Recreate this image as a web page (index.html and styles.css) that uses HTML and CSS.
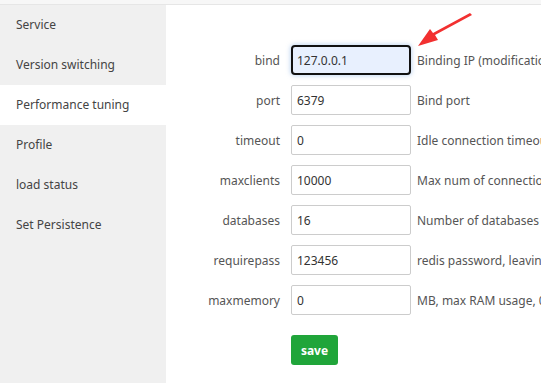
FILE: index.html
```html
<!DOCTYPE html>
<html>
<head>
<meta charset="utf-8">
<link rel="stylesheet" href="styles.css">
</head>
<body>
<div class="topbar"></div>
<div class="layout">
  <nav class="sidebar">
    <div class="item">Service</div>
    <div class="item">Version switching</div>
    <div class="item active">Performance tuning</div>
    <div class="item">Profile</div>
    <div class="item">load status</div>
    <div class="item">Set Persistence</div>
  </nav>
  <main class="main">
    <form class="form">
      <label class="lbl">bind</label>
      <input class="inp focused" value="127.0.0.1">
      <span class="desc">Binding IP (modification is not recommended)</span>

      <label class="lbl">port</label>
      <input class="inp" value="6379">
      <span class="desc">Bind port</span>

      <label class="lbl">timeout</label>
      <input class="inp" value="0">
      <span class="desc">Idle connection timeout, 0 means no disconnection</span>

      <label class="lbl">maxclients</label>
      <input class="inp" value="10000">
      <span class="desc">Max num of connections</span>

      <label class="lbl">databases</label>
      <input class="inp" value="16">
      <span class="desc">Number of databases</span>

      <label class="lbl">requirepass</label>
      <input class="inp" value="123456">
      <span class="desc">redis password, leaving blank means no password</span>

      <label class="lbl">maxmemory</label>
      <input class="inp" value="0">
      <span class="desc">MB, max RAM usage, 0 means no limit</span>

      <span class="lbl"></span>
      <div class="actions"><button type="button" class="btn">save</button></div>
      <span></span>
    </form>
    <svg class="arrow" width="70" height="40" viewBox="0 0 70 40">
      <path d="M56 1 L58 3 L21 23 L24 28 L4 34 L16 17 L19 21 Z" fill="#f23030"/>
    </svg>
  </main>
</div>
</body>
</html>
```

FILE: styles.css
```css
* { box-sizing: border-box; }
html, body { margin: 0; padding: 0; }
body {
  width: 541px;
  height: 383px;
  overflow: hidden;
  background: #fff;
  font-family: "Noto Sans", "Liberation Sans", sans-serif;
  font-size: 12px;
  color: #555;
}
.topbar {
  height: 5px;
  background: #f7f7f7;
  border-bottom: 1px solid #e6e6e6;
}
.layout {
  display: flex;
  height: 378px;
}
.sidebar {
  width: 166px;
  flex: none;
  background: #f0f0f0;
}
.item {
  height: 40px;
  line-height: 40px;
  padding-left: 16px;
  color: #444;
  white-space: nowrap;
}
.item.active { background: #fff; }
.main {
  flex: 1;
  position: relative;
  padding-top: 40px;
  overflow: hidden;
}
.form {
  display: grid;
  grid-template-columns: 125px 120px 1fr;
  row-gap: 10px;
  align-items: center;
  white-space: nowrap;
}
.lbl {
  text-align: right;
  padding-right: 11px;
  color: #555;
}
.inp {
  width: 120px;
  height: 30px;
  border: 1px solid #ccc;
  border-radius: 2px;
  padding: 0 5px;
  font: inherit;
  font-size: 12px;
  color: #333;
  background: #fff;
  outline: none;
}
.inp.focused {
  background: #e8f0fe;
  border: 2px solid #111;
  border-radius: 4px;
  padding: 0 4px;
  box-shadow: 0 0 4px 1px rgba(140, 180, 230, 0.5);
}
.desc {
  padding-left: 6px;
  color: #555;
  overflow: hidden;
}
.actions { padding-top: 10px; }
.btn {
  width: 47px;
  height: 30px;
  border: none;
  border-radius: 3px;
  background: #20a53a;
  color: #fff;
  font-family: "Noto Sans", "Liberation Sans", sans-serif;
  font-weight: bold;
  font-size: 12px;
  padding: 0;
}
.arrow {
  position: absolute;
  left: 248px;
  top: 7px;
}
```
